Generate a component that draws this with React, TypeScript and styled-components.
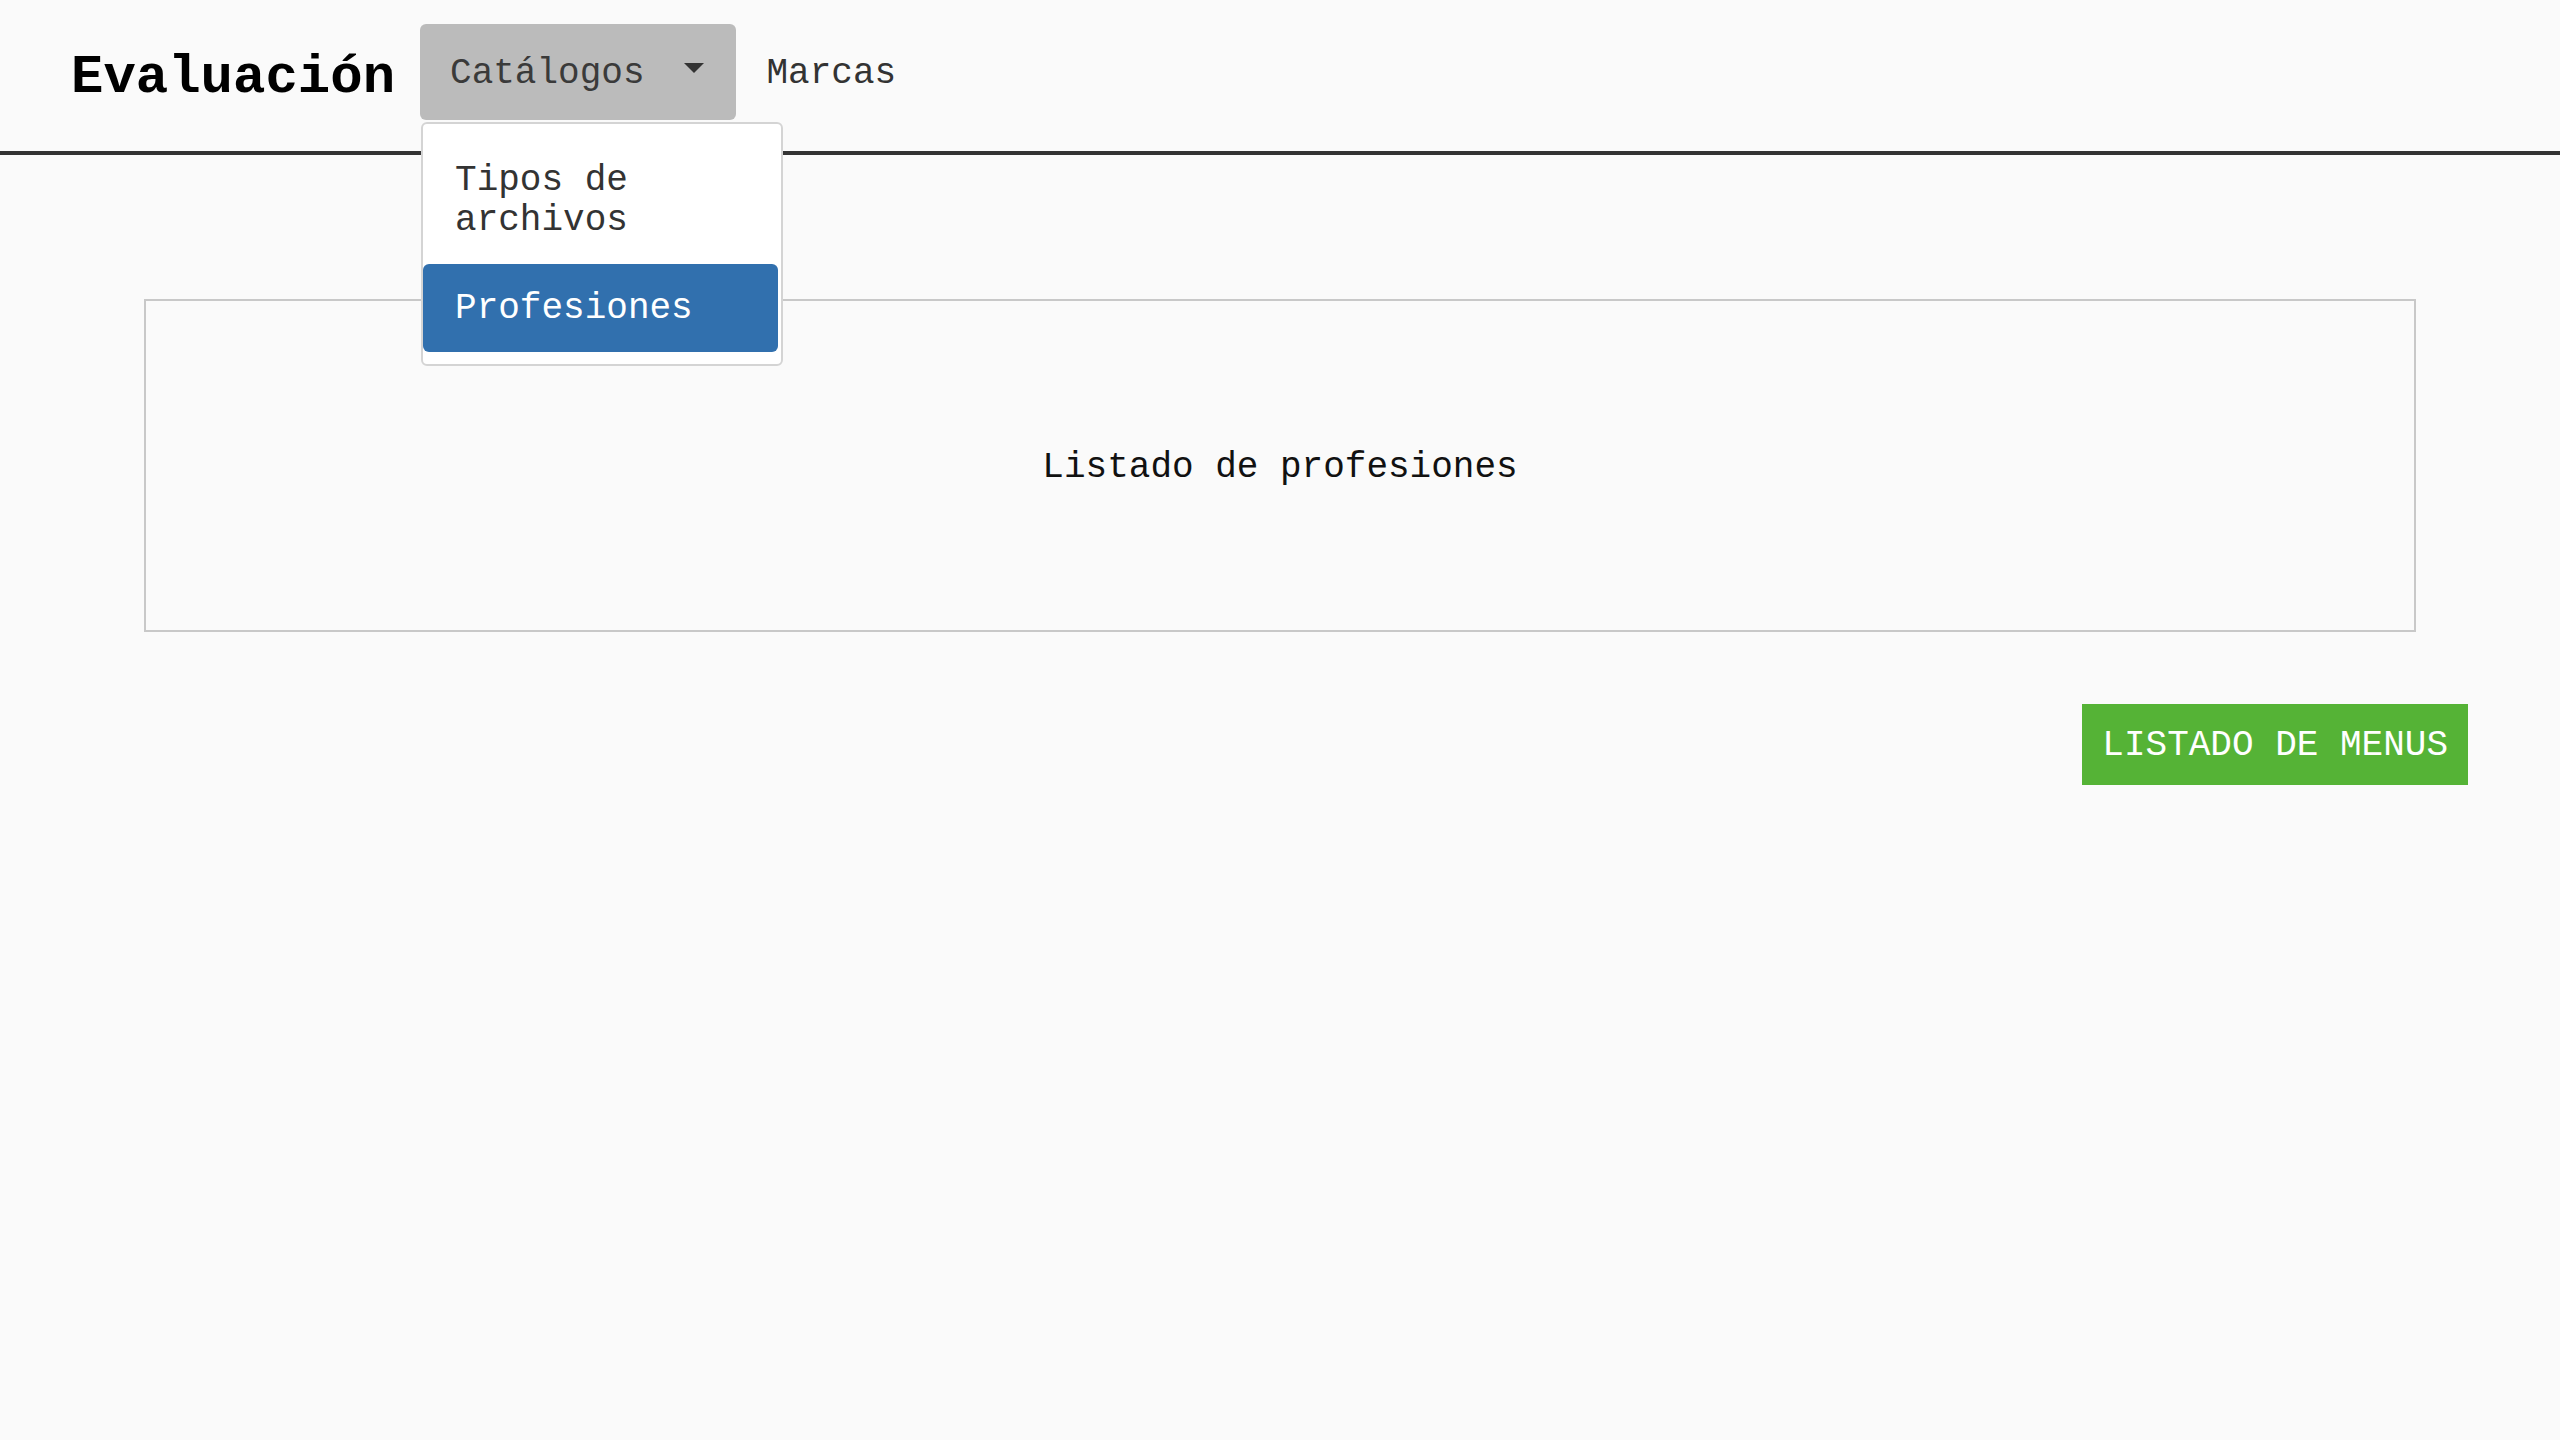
import React from "react";
import styled, { createGlobalStyle } from "styled-components";

const MONO = `"Courier New", Courier, "Nimbus Mono PS", "Nimbus Mono L", FreeMono, "Liberation Mono", monospace`;

const GlobalStyle = createGlobalStyle`
  html, body {
    margin: 0;
    padding: 0;
    background: #fafafa;
  }
  body {
    font-family: ${MONO};
    font-size: 36px;
    color: #111;
  }
  * { box-sizing: border-box; }
`;

const Header = styled.header`
  display: flex;
  align-items: flex-start;
  height: 155px;
  padding: 24px 0 0 71px;
  border-bottom: 4px solid #333;
`;

const Brand = styled.div`
  font-size: 54px;
  font-weight: bold;
  color: #000;
  margin-top: 23px;
  margin-right: 25px;
  line-height: normal;
`;

const NavItem = styled.div`
  position: relative;
`;

const Toggle = styled.button`
  display: flex;
  align-items: center;
  height: 96px;
  padding: 2px 32px 0 30px;
  border: none;
  border-radius: 6px;
  background: #bbbbbb;
  color: #3a3a3a;
  font-family: inherit;
  font-size: 36px;
  cursor: pointer;
`;

const Caret = styled.span`
  width: 0;
  height: 0;
  margin-left: 39px;
  margin-bottom: 11px;
  border-left: 10px solid transparent;
  border-right: 10px solid transparent;
  border-top: 10px solid #333;
`;

const NavLink = styled.a`
  display: flex;
  align-items: center;
  height: 96px;
  padding: 2px 31px 0;
  color: #333;
  font-size: 36px;
  text-decoration: none;
`;

const Menu = styled.div`
  position: absolute;
  top: calc(100% + 2px);
  left: 1px;
  width: 362px;
  padding: 12px 3px 12px 0;
  background: #fff;
  border: 2px solid #d4d4d4;
  border-radius: 6px;
  z-index: 10;
`;

const MenuItem = styled.a<{ $active?: boolean }>`
  display: block;
  padding: 25px 20px 23px 32px;
  line-height: 40px;
  font-size: 36px;
  border-radius: 6px;
  text-decoration: none;
  color: ${(p) => (p.$active ? "#fff" : "#333")};
  background: ${(p) => (p.$active ? "#3170ae" : "transparent")};
`;

const Main = styled.main`
  padding: 144px 144px 0;
`;

const Card = styled.section`
  display: flex;
  align-items: center;
  justify-content: center;
  height: 333px;
  padding-top: 4px;
  border: 2px solid #c8c8c8;
  color: #111;
  font-size: 36px;
`;

const Actions = styled.div`
  display: flex;
  justify-content: flex-end;
  margin-top: 72px;
  margin-right: -52px;
`;

const GreenButton = styled.button`
  padding: 21px 20px 19px;
  line-height: 41px;
  border: none;
  border-radius: 0;
  background: #55b336;
  color: #fff;
  font-family: inherit;
  font-size: 36px;
  cursor: pointer;
`;

export default function App() {
  return (
    <>
      <GlobalStyle />
      <Header>
        <Brand>Evaluación</Brand>
        <NavItem>
          <Toggle>
            Catálogos
            <Caret />
          </Toggle>
          <Menu>
            <MenuItem href="#">Tipos de archivos</MenuItem>
            <MenuItem href="#" $active>
              Profesiones
            </MenuItem>
          </Menu>
        </NavItem>
        <NavLink href="#">Marcas</NavLink>
      </Header>
      <Main>
        <Card>Listado de profesiones</Card>
        <Actions>
          <GreenButton>LISTADO DE MENUS</GreenButton>
        </Actions>
      </Main>
    </>
  );
}
